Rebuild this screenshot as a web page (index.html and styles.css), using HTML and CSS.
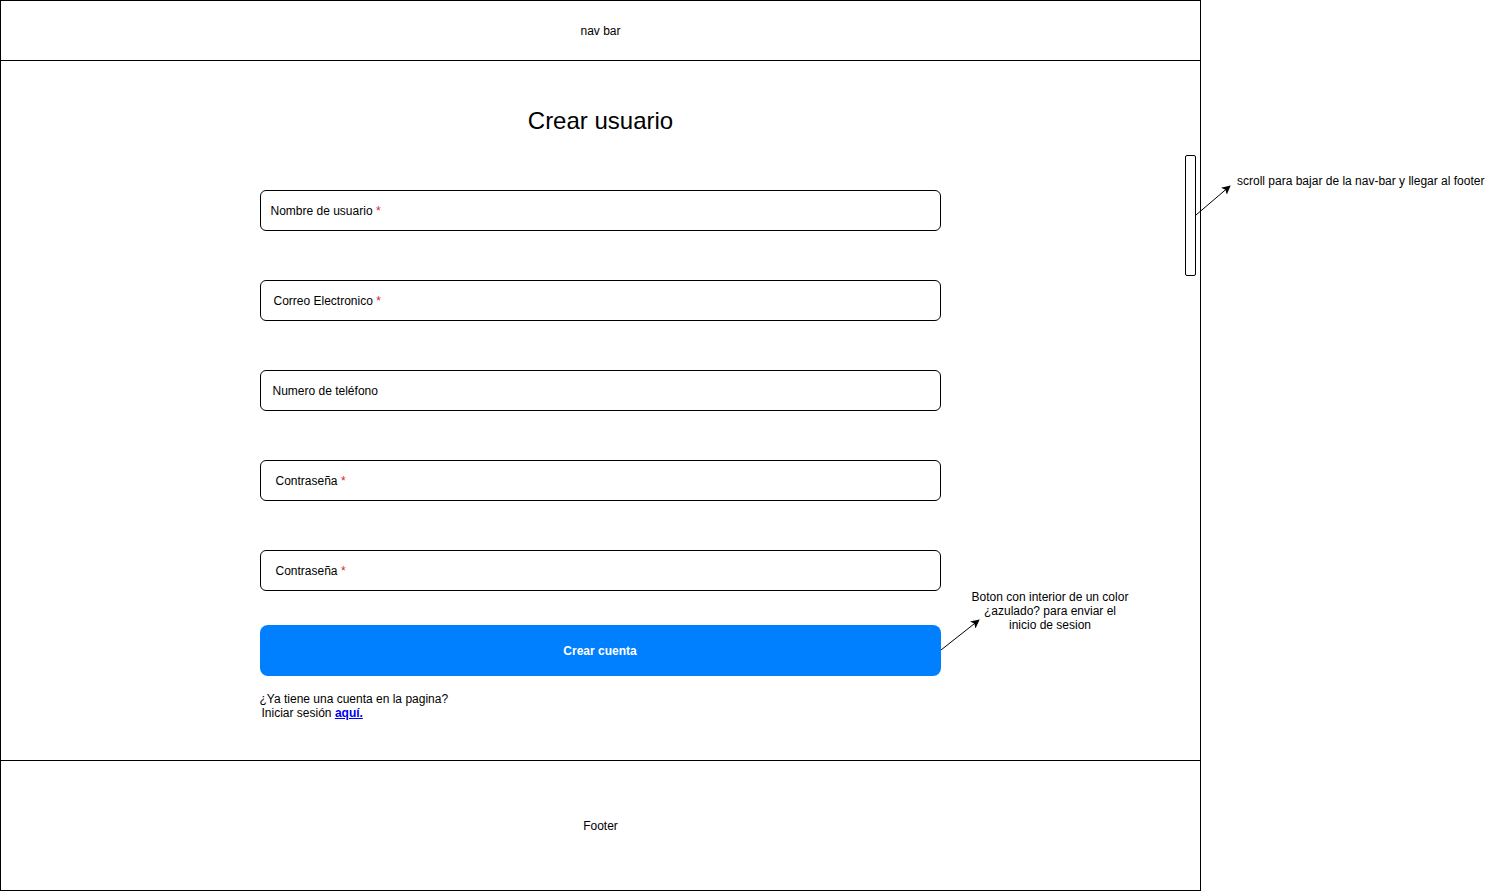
FILE: index.html
```html
<!DOCTYPE html>
<html lang="es">
<head>
<meta charset="utf-8">
<title>Crear usuario</title>
<link rel="stylesheet" href="styles.css">
</head>
<body>
<div class="canvas">
  <div class="frame">
    <header class="nav">nav bar</header>
    <main class="main">
      <h1 class="title">Crear usuario</h1>
      <form class="form">
        <div class="field pad-10">Nombre de usuario <span class="req">*</span></div>
        <div class="field pad-13">Correo Electronico <span class="req">*</span></div>
        <div class="field pad-12">Numero de teléfono</div>
        <div class="field pad-15">Contraseña <span class="req">*</span></div>
        <div class="field pad-15">Contraseña <span class="req">*</span></div>
        <button type="button" class="btn">Crear cuenta</button>
        <p class="login">¿Ya tiene una cuenta en la pagina?<br><span class="login-2">Iniciar sesión <a href="#" class="link">aquí.</a></span></p>
      </form>
    </main>
    <footer class="footer">Footer</footer>
    <div class="scrollbar"></div>
  </div>

  <p class="note note-scroll">scroll para bajar de la nav-bar y llegar al footer</p>
  <p class="note note-btn">Boton con interior de un color<br>¿azulado? para enviar el<br>inicio de sesion</p>

  <svg class="arrows" width="1491" height="891" viewBox="0 0 1491 891">
    <defs>
      <marker id="ah" viewBox="0 0 10 10" refX="9" refY="5" markerWidth="9" markerHeight="9" markerUnits="userSpaceOnUse" orient="auto">
        <path d="M0,0 L10,5 L0,10 L2.5,5 Z" fill="#000"/>
      </marker>
    </defs>
    <line x1="1196" y1="215" x2="1230" y2="186" stroke="#000" stroke-width="1" marker-end="url(#ah)"/>
    <line x1="941" y1="650" x2="979" y2="620" stroke="#000" stroke-width="1" marker-end="url(#ah)"/>
  </svg>
</div>
</body>
</html>
```

FILE: styles.css
```css
* { box-sizing: border-box; }

html, body {
  margin: 0;
  padding: 0;
  background: #fff;
}

body {
  font-family: "Liberation Sans", Arial, Helvetica, sans-serif;
  font-size: 12px;
  color: #000;
}

.canvas {
  position: relative;
  width: 1491px;
  height: 891px;
  overflow: hidden;
}

.frame {
  position: relative;
  width: 1201px;
  height: 891px;
  border: 1px solid #000;
  display: flex;
  flex-direction: column;
}

.nav {
  height: 60px;
  border-bottom: 1px solid #000;
  display: flex;
  align-items: center;
  justify-content: center;
  padding-top: 1px;
}

.main {
  height: 699px;
  display: flex;
  flex-direction: column;
  align-items: center;
}

.title {
  margin: 46px 0 0;
  font-size: 24px;
  line-height: 28px;
  font-weight: normal;
  text-align: center;
  width: 100%;
}

.form {
  width: 681px;
  margin-top: 55px;
  margin-left: -1px;
  display: flex;
  flex-direction: column;
}

.field {
  height: 41px;
  border: 1px solid #000;
  border-radius: 6px;
  display: flex;
  align-items: center;
  white-space: pre;
  margin-bottom: 49px;
  padding-top: 1px;
}

.field:nth-of-type(5) { margin-bottom: 34px; }

.pad-10 { padding-left: 10px; }
.pad-12 { padding-left: 12px; }
.pad-13 { padding-left: 13px; }
.pad-15 { padding-left: 15px; }

.req { color: #e02424; }

.btn {
  height: 51px;
  border: none;
  border-radius: 8px;
  background: #007fff;
  color: #fff;
  font-family: inherit;
  font-size: 12px;
  font-weight: bold;
  padding: 0;
  cursor: pointer;
}

.login {
  margin: 16px 0 0;
  line-height: 14px;
}

.login-2 { padding-left: 2px; }

.link {
  color: #0000ee;
  font-weight: bold;
  text-decoration: underline;
}

.footer {
  flex: 1;
  border-top: 1px solid #000;
  display: flex;
  align-items: center;
  justify-content: center;
  padding-top: 1px;
}

.scrollbar {
  position: absolute;
  left: 1184px;
  top: 154px;
  width: 11px;
  height: 121px;
  border: 1px solid #000;
  border-radius: 2px;
  background: #fff;
}

.note {
  position: absolute;
  margin: 0;
  line-height: 14px;
}

.note-scroll {
  left: 1237px;
  top: 174px;
  white-space: nowrap;
}

.note-btn {
  left: 960px;
  top: 590px;
  width: 180px;
  text-align: center;
}

.arrows {
  position: absolute;
  left: 0;
  top: 0;
  pointer-events: none;
}
```
